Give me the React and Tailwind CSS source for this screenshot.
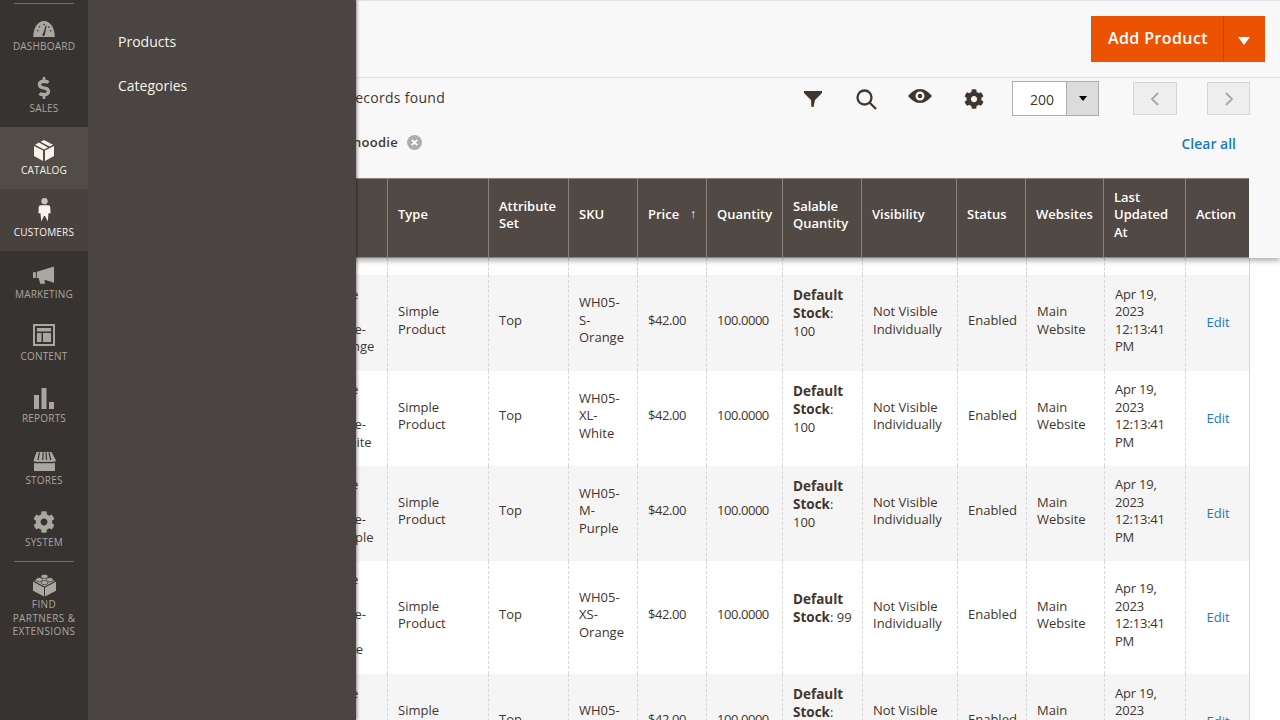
import React from "react";
import { FaCog, FaDollarSign } from "react-icons/fa";

const Gear = ({ className }) => <FaCog className={className} />;

const icons = {
  dashboard: (
    <svg width="22" height="17" viewBox="0 0 24 19" fill="currentColor">
      <path d="M0 18C0 9 5 1 12 1s12 8 12 17v1H0z" />
      <path d="M11 15l3-9 1 .4-2 9.6a1.500 1.500 0 1 1-2-1z" fill="#373330" />
      <g fill="#373330"><circle cx="5" cy="12" r=".9" /><circle cx="7" cy="7.500" r=".9" /><circle cx="12" cy="5" r=".9" /><circle cx="17.500" cy="8" r=".9" /><circle cx="19.500" cy="12" r=".9" /></g>
    </svg>
  ),
  catalog: (
    <svg width="20" height="22" viewBox="0 0 20 22" fill="currentColor">
      <path d="M0 7v10l9 5V11.500zM20 7v10l-9 5V11.500z" />
      <path d="M10 10.500 L1 5.800 L5 3.600 L14 8.400zM15.600 7.500L6.600 2.800 L10 1l9 4.800z" />
    </svg>
  ),
  customers: (
    <svg width="13" height="25" viewBox="0 0 14 26" fill="currentColor">
      <circle cx="7" cy="4" r="3.400" fill="#c9c4bb" />
      <path d="M3 8.500h8c1.400 0 2 1 2.200 2.200l.3 6.300-2.200 0L10.500 26 7.600 20H6.400l-2.900 6-.8-9-2.200 0 .3-6.300C1 9.500 1.600 8.500 3 8.500z" />
    </svg>
  ),
  marketing: (
    <svg width="22" height="19" viewBox="0 0 23 19" fill="currentColor">
      <path d="M0 6h3v6H0zM4 5.500 22 0v17L12 13.900 12.500 18H7.500L6 12.200 4 12z" />
    </svg>
  ),
  content: (
    <svg width="22" height="22" viewBox="0 0 22 22" fill="currentColor">
      <path fillRule="evenodd" d="M0 0h22v22H0zM2 2v18h18V2z" />
      <path d="M4 4h14v3.500H4zM4 9h4.500v9H4zM10 9h8v9h-8z" />
    </svg>
  ),
  reports: (
    <svg width="20" height="21" viewBox="0 0 20 21" fill="currentColor">
      <path d="M0 7h5v14H0zM7.500 0h5v21h-5zM15 14h5v7h-5z" />
    </svg>
  ),
  stores: (
    <svg width="24" height="19" viewBox="0 0 24 19" fill="currentColor">
      <path d="M4.500 0h15l4.500 8.500c-.6 1.300-2 1.500-3 1-1 .8-2.200.8-3.200 0-1 .8-2.300.8-3.300 0-1 .8-2.500.8-3.500 0-1 .8-2.300.8-3.300 0-1 .8-2.200.8-3.200 0-1 .5-2.400.3-3-1z" />
      <path d="M2 11c1 .3 1.500.2 2.200 0 1.200.5 2.300.5 3.500 0 1.200.5 2.400.5 3.400 0 1.200.5 2.500.5 3.500 0 1.200.5 2.300.5 3.400 0 1.100.5 2.300.5 3.300 0 .6.2 1.200.2 1.700 0V19H2z" />
      <path d="M7.500 0.500 6 8M11.200 .5 10.700 8M14 .5 14.600 8M17 .5 18.700 8" stroke="#373330" strokeWidth="1.200" fill="none" />
    </svg>
  ),
  partners: (
    <svg width="23" height="24" viewBox="0 0 24 24" fill="currentColor">
      <path d="M0 8.500 11.500 14.500V24L0 18zM24 8.500 12.500 14.500V24L24 18z" />
      <path d="M12 3 23 7.800 12 13.500 1 7.800z" />
      <g stroke="#373330" strokeWidth=".7"><ellipse cx="12" cy="3" rx="3.600" ry="2.200" /><ellipse cx="6.500" cy="6.500" rx="3.600" ry="2.200" /><ellipse cx="17.500" cy="6.500" rx="3.600" ry="2.200" /><ellipse cx="12" cy="9.500" rx="3.600" ry="2.200" /></g>
    </svg>
  ),
};

const navItems = [
  { label: "Dashboard", icon: icons.dashboard, cls: "h-[61px] pt-[13px]" },
  { label: "Sales", icon: <FaDollarSign size={22} />, cls: "h-[62px] pt-[10px]" },
  { label: "Catalog", icon: icons.catalog, cls: "h-[62px] pt-[10px] bg-[#524c46] text-[#f7f3eb]" },
  { label: "Customers", icon: icons.customers, cls: "h-[62px] pt-[4px] bg-[#47423e] text-[#f7f3eb]" },
  { label: "Marketing", icon: icons.marketing, cls: "h-[62px] pt-[12px]" },
  { label: "Content", icon: icons.content, cls: "h-[62px] pt-[8px]" },
  { label: "Reports", icon: icons.reports, cls: "h-[62px] pt-[10px]" },
  { label: "Stores", icon: icons.stores, cls: "h-[62px] pt-[12px]" },
  { label: "System", icon: <Gear className="w-[22px] h-[22px]" />, cls: "h-[62px] pt-[10px]" },
];

const headCols = [188, 81, 101, 80, 69, 69, 76, 79, 95, 69, 78, 82, 64];
const bodyCols = [188, 81, 101, 80, 69, 69, 76, 80, 95, 69, 78, 81, 64];

const headers = ["Type", "Attribute Set", "SKU", "Price", "Quantity", "Salable Quantity", "Visibility", "Status", "Websites", "Last Updated At", "Action"];

const rows = [
  { name: ["Selene", "Yoga", "Hoodie-", "S-Orange"], sku: "WH05-S-Orange", bg: "bg-[#f5f5f5]", stock: "100", h: "h-[96px]" },
  { name: ["Selene", "Yoga", "Hoodie-", "XL-White"], sku: "WH05-XL-White", bg: "bg-white", stock: "100", h: "h-[95px]" },
  { name: ["Selene", "Yoga", "Hoodie-", "M-Purple"], sku: "WH05-M-Purple", bg: "bg-[#f5f5f5]", stock: "100", h: "h-[95px]" },
  { name: ["Selene", "Yoga", "Hoodie-", "XS-", "Orange"], sku: "WH05-XS-Orange", bg: "bg-white", stock: "99", h: "h-[113px]" },
  { name: ["Selene", "Yoga", "Hoodie-", "S-Blue"], sku: "WH05-S-Blue", bg: "bg-[#f5f5f5]", stock: "100", h: "h-[96px]" },
];

const td = "border-l border-dashed border-[#d6d6d6] pl-[10px] pr-[9px] pt-[10px] pb-[15px] align-middle";

const Cols = ({ cols }) => (
  <colgroup>
    {cols.map((w, i) => (
      <col key={i} style={{ width: w }} />
    ))}
  </colgroup>
);

export default function App() {
  return (
    <div className="relative w-[1280px] h-[720px] overflow-hidden bg-white font-['Open_Sans',sans-serif] text-[13px] leading-[17.5px] text-[#41362f]">
      <div className="ml-[88px]">
        <div className="relative z-10 bg-[#f8f8f8] shadow-[0_3px_5px_rgba(0,0,0,0.3)] h-[258px]">
          <div className="h-[78px] border-t border-b border-[#e3e3e3] flex justify-end items-start pt-[15px] pr-[15px]">
            <div className="flex h-[46px] w-[174px] bg-[#eb5202] text-white">
              <div className="w-[132px] pl-[17px] flex items-center text-[16px] font-semibold tracking-[0.025em] whitespace-nowrap">Add Product</div>
              <div className="flex-1 border-l border-[#c94602] flex items-center justify-center pt-[4px] pr-[2px]">
                <div className="w-0 h-0 border-l-[6px] border-r-[6px] border-t-[8px] border-l-transparent border-r-transparent border-t-white" />
              </div>
            </div>
          </div>

          <div className="flex items-center pr-[30px] pt-[3px] h-[38px]">
            <div className="w-[357px] -mt-[2px] text-right text-[14px] leading-[36px] tracking-[0.02em] whitespace-nowrap">36 records found</div>
            <div className="flex-1" />
            <div className="flex items-center mr-[26px]">
              <svg className="w-[24px] mr-[29px]" width="24" height="18" viewBox="0 0 24 18" fill="currentColor"><path d="M3 1h18v2l-7 7-1.500 7H10.500L10 10 3 3z" /></svg>
              <svg className="w-[24px] mr-[30px]" width="24" height="24" viewBox="0 0 24 24" fill="none" stroke="currentColor" strokeWidth="2.300"><circle cx="10.500" cy="10.500" r="7" /><path d="M15.500 15.500 22 22" /></svg>
              <svg className="w-[24px] mr-[30px] -mt-[5px]" width="24" height="14" viewBox="0 0 24 14" fill="currentColor"><path fillRule="evenodd" d="M12 0c5 0 9 3.500 12 7-3 3.500-7 7-12 7S3 10.500 0 7c3-3.500 7-7 12-7zm0 2.500a4.500 4.500 0 1 0 0 9 4.500 4.500 0 0 0 0-9z" /><circle cx="12" cy="7" r="2.200" /></svg>
              <Gear className="w-[20px] h-[20px] mx-[2px]" />
            </div>
            <div className="flex w-[87px] h-[35px] border border-[#adadad] bg-white mr-[34px]">
              <div className="w-[53px] text-right pr-[12px] text-[14px] leading-[35px]">200</div>
              <div className="flex-1 bg-[#dcdcdc] border-l border-[#adadad] flex items-center justify-center">
                <div className="w-0 h-0 border-l-[4px] border-r-[4px] border-t-[5px] border-l-transparent border-r-transparent border-t-black" />
              </div>
            </div>
            <div className="w-[44px] h-[33px] bg-[#eeeeee] border border-[#d6d6d6] flex items-center justify-center mr-[30px]">
              <svg width="10" height="14" viewBox="0 0 10 14" fill="none" stroke="#a8a8a8" strokeWidth="1.800"><path d="M8 1 2 7l6 6" /></svg>
            </div>
            <div className="w-[43px] h-[33px] bg-[#eeeeee] border border-[#d6d6d6] flex items-center justify-center">
              <svg width="10" height="14" viewBox="0 0 10 14" fill="none" stroke="#a8a8a8" strokeWidth="1.800"><path d="M2 1l6 6-6 6" /></svg>
            </div>
          </div>

          <div className="flex items-center pr-[44px] h-[62px] pb-[9px]">
            <div className="w-[310px] text-right font-semibold text-[13px] tracking-[0.02em] whitespace-nowrap">Keyword: hoodie</div>
            <div className="ml-[9px] w-[15px] h-[15px] rounded-full bg-[#adadad] flex items-center justify-center">
              <svg width="7" height="7" viewBox="0 0 7 7" stroke="#fff" strokeWidth="1.700"><path d="M.8.8l5.400 5.400M6.200.8.8 6.200" /></svg>
            </div>
            <div className="flex-1" />
            <div className="text-[14px] font-semibold text-[#1979c3] whitespace-nowrap pt-[3px]">Clear all</div>
          </div>

          <table className="ml-[30px] w-[1131px] table-fixed border-separate border-spacing-0">
            <Cols cols={headCols} />
            <thead>
              <tr className="h-[80px]">
                <th className="bg-[#514943] border-t border-b border-[#8a837f]" />
                <th className="bg-[#514943] border-t border-b border-[#8a837f]" />
                {headers.map((h) => (
                  <th key={h} className="bg-[#514943] border-t border-b border-l border-[#8a837f] pl-[10px] pr-[6px] pb-[6px] text-left align-middle text-white font-semibold text-[13px] leading-[17.5px]">
                    {h === "Price" ? (
                      <div className="flex justify-between">
                        <span>Price</span>
                        <span className="font-normal text-[12px] pr-[4px] -mt-px">↑</span>
                      </div>
                    ) : (
                      h
                    )}
                  </th>
                ))}
              </tr>
            </thead>
          </table>
        </div>

        <table className="ml-[30px] w-[1131px] table-fixed border-separate border-spacing-0 border-r border-[#d6d6d6]">
          <Cols cols={bodyCols} />
          <tbody>
            <tr className="h-[17px]">
              <td />
              <td />
              {headers.map((h) => (
                <td key={h} className="border-l border-dashed border-[#d6d6d6]" />
              ))}
            </tr>
            {rows.map((r) => (
              <tr key={r.sku} className={`${r.bg} ${r.h}`}>
                <td />
                <td className="pl-[12px] pr-0 pt-[10px] pb-[15px] align-middle whitespace-nowrap">
                  {r.name.map((l) => (
                    <div key={l}>{l}</div>
                  ))}
                </td>
                <td className={td}>Simple Product</td>
                <td className={td}>Top</td>
                <td className={td}>{r.sku}</td>
                <td className={`${td} tracking-[-0.45px]`}>$42.00</td>
                <td className={`${td} tracking-[-0.45px]`}>100.0000</td>
                <td className={`${td} pb-[30px] leading-[18px]`}>
                  <strong className="font-bold text-[13.5px]">Default Stock</strong>: {r.stock}
                </td>
                <td className={td}>Not Visible Individually</td>
                <td className={td}>Enabled</td>
                <td className={td}>Main Website</td>
                <td className={`${td} tracking-[-0.2px]`}>Apr 19, 2023 12:13:41 PM</td>
                <td className={`${td} text-center pt-[15px] text-[#1979c3]`}>Edit</td>
              </tr>
            ))}
          </tbody>
        </table>
      </div>

      <nav className="absolute z-30 left-0 top-0 bottom-0 w-[88px] bg-[#373330] text-[#aaa6a0] pt-[3px]">
        <div className="mx-[14px] border-t border-[#736e69]" />
        {navItems.map((n) => (
          <div key={n.label} className={`flex flex-col items-center ${n.cls}`}>
            <div className="flex-1 flex items-center justify-center">{n.icon}</div>
            <div className="uppercase text-[10px] leading-[14px] tracking-[0.02em] pb-[12px] box-content">{n.label}</div>
          </div>
        ))}
        <div className="mx-[14px] border-t border-[#736e69]" />
        <div className="flex flex-col items-center pt-[11px]">
          {icons.partners}
          <div className="uppercase text-[10px] leading-[13.5px] tracking-[0.04em] text-center mt-[1px] w-[72px]">
            Find Partners &amp; Extensions
          </div>
        </div>
      </nav>

      <aside className="absolute z-20 left-[88px] top-0 bottom-0 w-[268px] bg-[#4a4542] shadow-[1px_0_3px_rgba(0,0,0,0.45)] pl-[30px] pt-[20px] text-[14px] text-[#f7f3eb]">
        <div className="h-[44px] leading-[44px]">Products</div>
        <div className="h-[44px] leading-[44px]">Categories</div>
      </aside>
    </div>
  );
}
